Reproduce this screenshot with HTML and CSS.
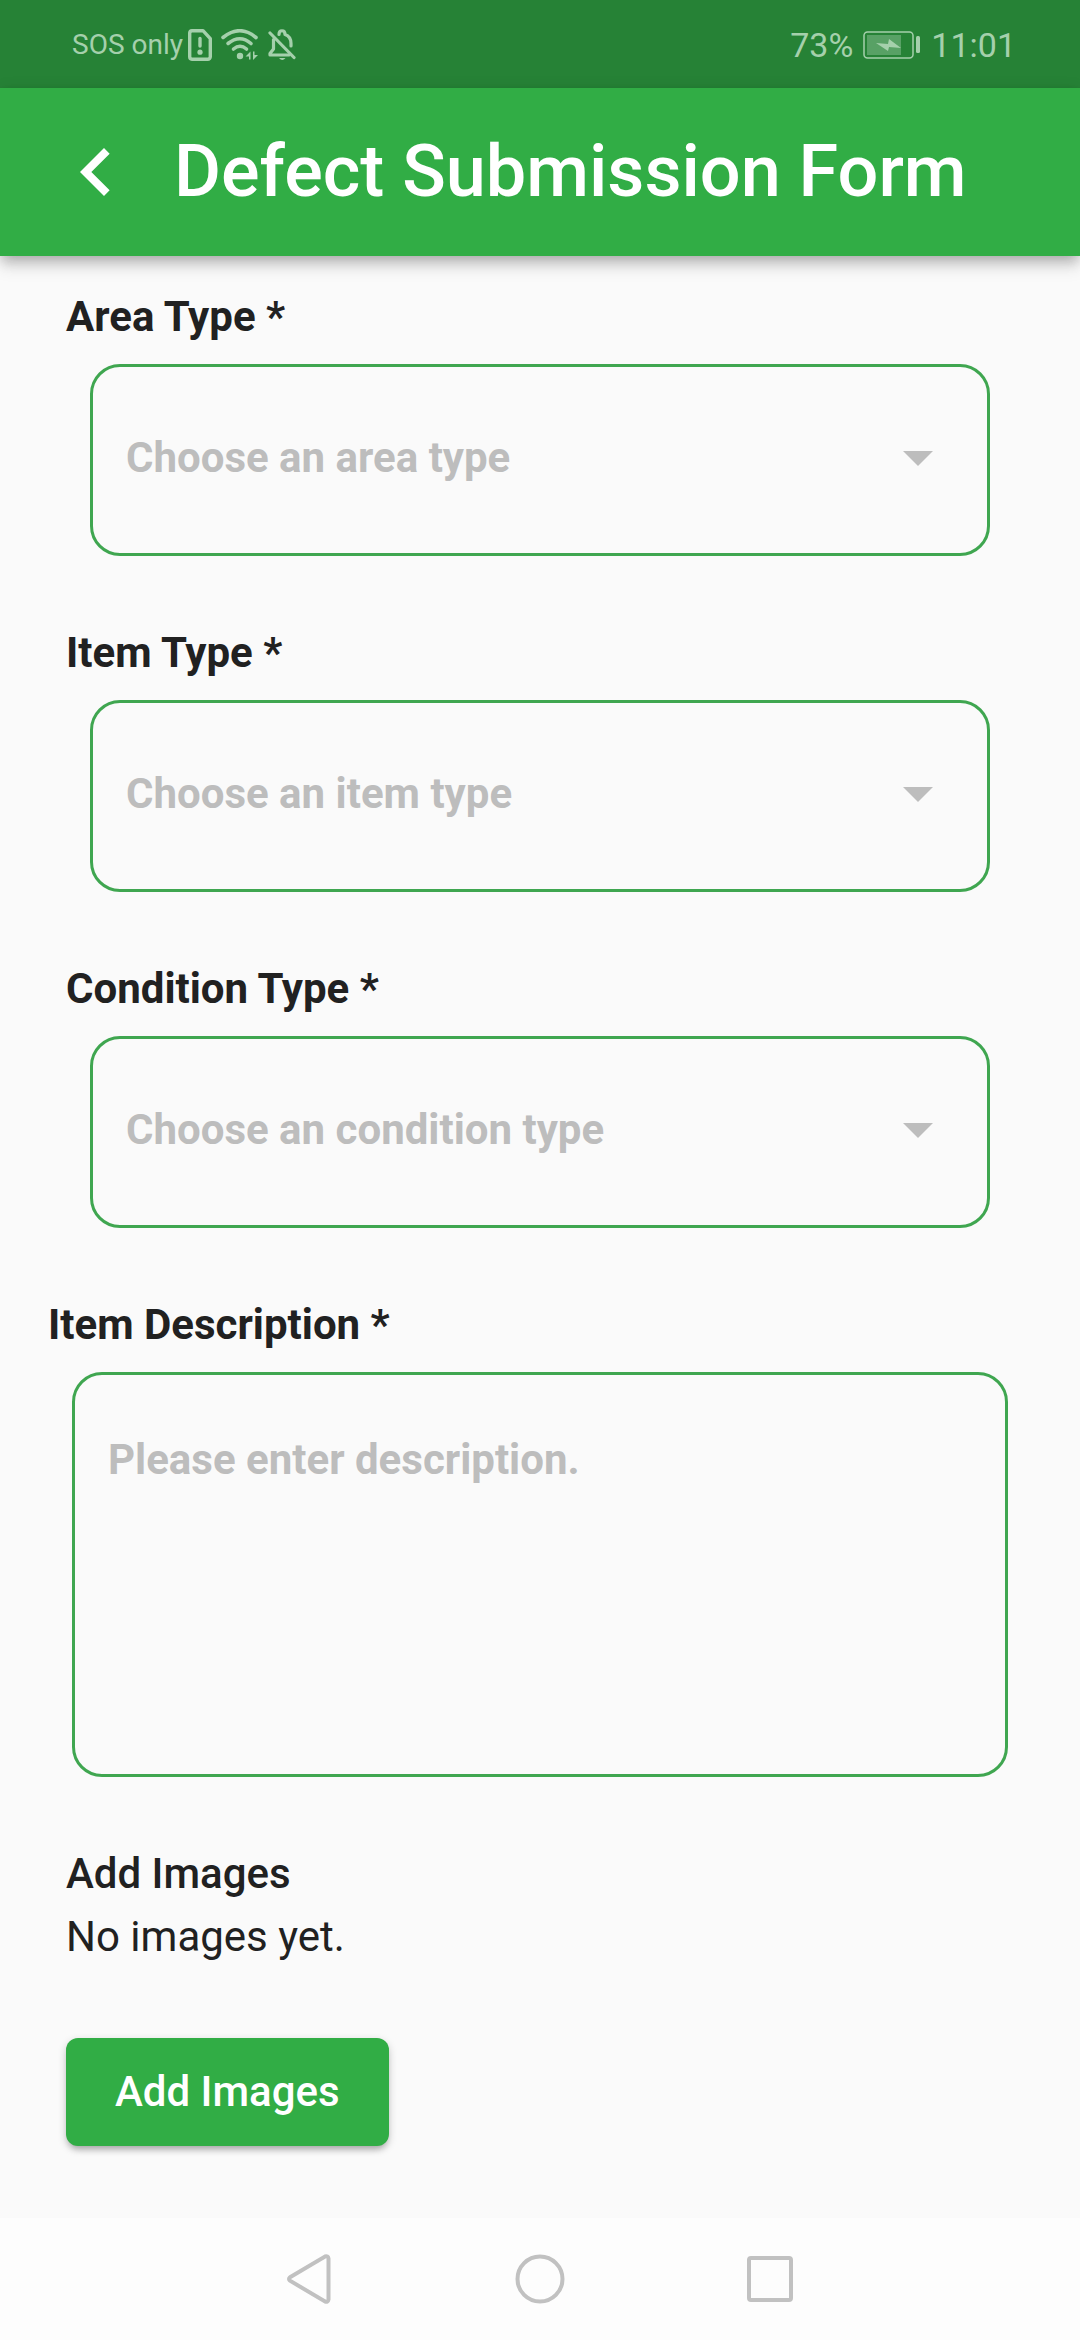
FILE: index.html
```html
<!DOCTYPE html>
<html lang="en">
<head>
  <meta charset="utf-8">
  <meta name="viewport" content="width=device-width, initial-scale=1">
  <title>Defect Submission Form</title>
  <link rel="stylesheet" href="styles.css">
</head>
<body>
  <div class="status-bar">
    <div class="status-left">
      <span class="carrier">SOS only</span>
      <svg width="24" height="32" viewBox="0 0 24 32" fill="none" stroke="currentColor" stroke-width="3.400" stroke-linejoin="round">
        <path d="M4 1.700h11l7.300 8v18a2.500 2.500 0 0 1-2.500 2.500H4a2.500 2.500 0 0 1-2.300-2.500V4A2.500 2.500 0 0 1 4 1.700z"/>
        <path d="M12 9.500v7.500" stroke-linecap="round"/>
        <circle cx="12" cy="23.200" r="2.600" fill="currentColor" stroke="none"/>
      </svg>
      <svg class="wifi" width="38" height="32" viewBox="0 0 38 32" fill="none" stroke="currentColor" stroke-width="3.600" stroke-linecap="round">
        <path d="M2 8.500Q19-5 35 8.500"/>
        <path d="M7 14.500Q19 5 30 14.500"/>
        <path d="M12.500 20Q19 14.500 25.500 20"/>
        <g fill="currentColor" stroke="none">
          <circle cx="19" cy="27" r="3.200"/>
          <path d="M29.500 22.500v8H28v-3h-3.500zM32 22.500h1.500v3.500H37l-5 5z"/>
        </g>
      </svg>
      <svg width="28" height="32" viewBox="0 0 28 32" fill="none" stroke="currentColor" stroke-width="3.200" stroke-linecap="round" stroke-linejoin="round">
        <path d="M2 4l24 24.500"/>
        <path d="M11 5.500C11 .5 17 .5 17 5.500c4.500 1.500 6 5 6 9V17"/>
        <path d="M5.500 10.500V20l-3.500 4.500V26h19"/>
        <path d="M11 29h6.500q-3.200 4-6.500 0z" fill="currentColor" stroke="none"/>
      </svg>
    </div>
    <div class="status-right">
      <span>73%</span>
      <svg width="58" height="28" viewBox="0 0 58 28">
        <rect x="1" y="1" width="49" height="26" rx="3.500" fill="none" stroke="currentColor" stroke-width="1.500"/>
        <rect x="4" y="4" width="34" height="20" fill="currentColor" opacity=".4"/>
        <path d="M13 12l12 1 1-5 12 9-12-1-1 4z" fill="currentColor"/>
        <rect x="53" y="5" width="4" height="17" rx="1.500" fill="currentColor"/>
      </svg>
      <span>11:01</span>
    </div>
  </div>

  <header class="app-bar">
    <button type="button" class="back" aria-label="Back">
      <svg width="96" height="96" viewBox="0 0 24 24" fill="currentColor">
        <path d="M15.410 7.410L14 6l-6 6 6 6 1.410-1.410L10.830 12z"/>
      </svg>
    </button>
    <h1>Defect Submission Form</h1>
  </header>

  <main>
    <form id="defect-form">
      <div class="field">
        <label for="area">Area Type *</label>
        <div class="select">
          <select id="area" required>
            <option value="">Choose an area type</option>
          </select>
        </div>
      </div>
      <div class="field">
        <label for="item">Item Type *</label>
        <div class="select">
          <select id="item" required>
            <option value="">Choose an item type</option>
          </select>
        </div>
      </div>
      <div class="field">
        <label for="condition">Condition Type *</label>
        <div class="select">
          <select id="condition" required>
            <option value="">Choose an condition type</option>
          </select>
        </div>
      </div>
      <div class="field field-wide">
        <label for="description">Item Description *</label>
        <textarea id="description" placeholder="Please enter description." required></textarea>
      </div>
      <section class="images">
        <h2>Add Images</h2>
        <p>No images yet.</p>
        <button type="button" class="add-button">Add Images</button>
      </section>
    </form>
  </main>

  <nav class="nav-bar">
    <button type="button" aria-label="Back">
      <svg width="52" height="52" viewBox="0 0 52 52">
        <path d="M6 24.300L41 3.500q3-1 3.500 2v41q-.5 3-3.500 2L6 27.700q-2-1.700 0-3.400z"/>
      </svg>
    </button>
    <button type="button" aria-label="Home">
      <svg width="52" height="52" viewBox="0 0 52 52">
        <circle cx="26" cy="26" r="22.500"/>
      </svg>
    </button>
    <button type="button" aria-label="Recent apps">
      <svg width="52" height="52" viewBox="0 0 52 52">
        <rect x="5" y="5" width="42" height="42" rx="2"/>
      </svg>
    </button>
  </nav>
</body>
</html>
```
FILE: styles.css
```css
* {
  box-sizing: border-box;
}

body {
  display: flex;
  flex-direction: column;
  min-height: 100vh;
  margin: 0;
  background-color: #fafafa;
  color: #212121;
  font-family: Roboto, sans-serif;
  font-size: 42px;
  line-height: 50px;
}

h1, h2, p {
  margin: 0;
}

button, select, textarea {
  font-family: inherit;
  font-size: inherit;
  line-height: inherit;
}

svg {
  display: block;
  flex: none;
}

/* status bar */
.status-bar {
  display: flex;
  justify-content: space-between;
  align-items: center;
  height: 88px;
  padding: 2px 64px 0 72px;
  background-color: #268236;
  color: #a5d0ac;
  font-size: 34px;
}

.status-left,
.status-right {
  display: flex;
  align-items: center;
}

.status-left {
  gap: 5px;
}

.status-right {
  gap: 10px;
}

.carrier {
  font-size: 28px;
}

.wifi {
  margin: 0 4px;
}

/* app bar */
.app-bar {
  display: flex;
  align-items: center;
  gap: 30px;
  height: 168px;
  padding: 0 48px;
  background-color: #31ad45;
  color: #fff;
  box-shadow: 0 6px 12px -3px rgba(0, 0, 0, 0.2), 0 12px 15px rgba(0, 0, 0, 0.1), 0 3px 16px rgba(0, 0, 0, 0.1);
}

.app-bar h1 {
  font-size: 72px;
  font-weight: 500;
  line-height: 84px;
  white-space: nowrap;
}

.back {
  padding: 0;
  border: none;
  background: none;
  color: inherit;
  cursor: pointer;
}

/* form */
main {
  flex: 1;
  padding: 36px 48px 72px;
}

form {
  display: flex;
  flex-direction: column;
  gap: 72px;
}

.field {
  display: flex;
  flex-direction: column;
  gap: 22px;
  padding: 0 18px;
}

.field-wide {
  padding: 0;
}

label {
  font-weight: 700;
}

.select {
  position: relative;
  margin: 0 24px;
}

.select::after {
  content: "";
  position: absolute;
  top: 87px;
  right: 57px;
  border: 15px solid transparent;
  border-top-color: #bdbdbd;
  border-bottom: none;
  pointer-events: none;
}

select,
textarea {
  display: block;
  border: 3px solid #3fa650;
  border-radius: 30px;
  background: none;
  color: #bdbdbd;
  font-weight: 700;
  outline: none;
}

select {
  appearance: none;
  width: 100%;
  height: 192px;
  padding: 0 33px 4px;
}

textarea {
  height: 405px;
  margin: 0 24px;
  padding: 60px 33px;
  color: #212121;
  resize: none;
}

textarea::placeholder {
  color: #bdbdbd;
}

/* images */
.images {
  padding: 0 18px;
}

.images h2 {
  font-size: 42px;
  font-weight: 500;
}

.images p {
  margin: 13px 0 76px;
}

.add-button {
  height: 108px;
  padding: 0 49px;
  border: none;
  border-radius: 12px;
  background-color: #31ad45;
  color: #fff;
  font-weight: 500;
  box-shadow: 0 6px 6px -3px rgba(0, 0, 0, 0.2), 0 3px 8px rgba(0, 0, 0, 0.2);
  cursor: pointer;
}

/* system navigation */
.nav-bar {
  display: flex;
  justify-content: center;
  align-items: center;
  gap: 178px;
  height: 122px;
  background-color: #fdfdfd;
}

.nav-bar button {
  padding: 0;
  border: none;
  background: none;
}

.nav-bar svg {
  fill: none;
  stroke: #c1c1c1;
  stroke-width: 4;
}
```
